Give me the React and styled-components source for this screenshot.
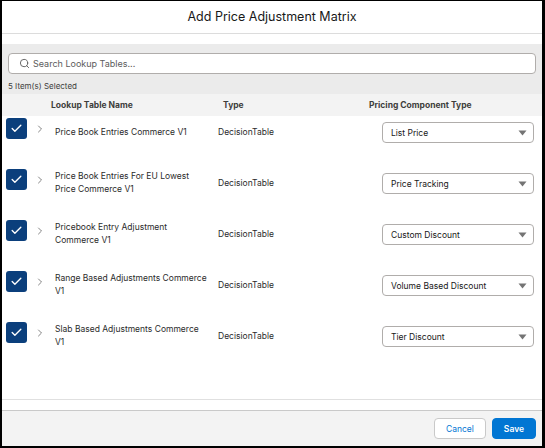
import React from 'react';
import styled, { createGlobalStyle } from 'styled-components';
import { Search, Check, ChevronRight } from 'lucide-react';

const GlobalStyles = createGlobalStyle`
  html, body {
    margin: 0;
    padding: 0;
    background: #fff;
  }
  body {
    font-family: Inter, "Liberation Sans", Arial, sans-serif;
    color: #181818;
  }
`;

const Frame = styled.div`
  width: 545px;
  height: 448px;
  box-sizing: border-box;
  border-style: solid;
  border-color: #000;
  border-width: 1px 3px 2px 2px;
  display: flex;
  flex-direction: column;
  background: #fff;
`;

const Header = styled.div`
  height: 32px;
  flex: none;
  display: flex;
  align-items: center;
  justify-content: center;
  border-bottom: 1px solid #dcdcdc;
`;

const Title = styled.h2`
  margin: 0 0 2px 0;
  font-size: 12.5px;
  font-weight: 400;
  color: #181818;
`;

const Gap = styled.div`
  height: ${(p) => p.h}px;
  flex: none;
`;

const Toolbar = styled.div`
  height: 50px;
  flex: none;
  box-sizing: border-box;
  background: #ebebeb;
  padding: 9px 6px 0 6px;
`;

const SearchBox = styled.label`
  height: 21px;
  box-sizing: border-box;
  border: 1px solid #b0adab;
  border-radius: 4px;
  background: #fff;
  display: flex;
  align-items: center;
  gap: 3px;
  padding-left: 10px;
  color: #5c5c5c;
`;

const SearchInput = styled.input`
  border: none;
  outline: none;
  flex: 1;
  font-family: inherit;
  font-size: 9px;
  color: #181818;
  background: transparent;
  padding: 0;
  &::placeholder {
    color: #5c5c5c;
  }
`;

const Selected = styled.div`
  font-size: 8px;
  color: #3e3e3c;
  margin-top: 7px;
`;

const TableArea = styled.div`
  flex: 1;
  border-bottom: 1px solid #e0e0e0;
`;

const HeadRow = styled.div`
  height: 22px;
  background: #f3f3f3;
  display: grid;
  grid-template-columns: 172px 146px auto;
  align-items: center;
  padding-left: 49px;
`;

const HeadCell = styled.div`
  font-size: 8.5px;
  font-weight: 700;
  color: #3e3e3c;
`;

const Row = styled.div`
  height: 51px;
  box-sizing: border-box;
  display: grid;
  grid-template-columns: 21px 28px 163px 164px 152px;
  align-items: start;
  padding: 2px 0 0 4px;
`;

const Checkbox = styled.span`
  width: 21px;
  height: 21px;
  border-radius: 3px;
  background: #0b3f7c;
  color: #fff;
  display: flex;
  align-items: center;
  justify-content: center;
`;

const Toggle = styled.span`
  height: 21px;
  display: flex;
  align-items: center;
  padding-left: 7px;
  color: #5c5c5c;
`;

const Cell = styled.div`
  min-height: 28px;
  display: flex;
  flex-direction: column;
  justify-content: center;
  font-size: 8.5px;
  line-height: 13px;
  color: #2b2b2b;
  white-space: nowrap;
`;

const Select = styled.div`
  margin-top: 4px;
  height: 21px;
  box-sizing: border-box;
  border: 1px solid #b0adab;
  border-radius: 4px;
  display: flex;
  align-items: center;
  justify-content: space-between;
  padding: 0 6px 0 8px;
  font-size: 8.5px;
  color: #181818;
`;

const Footer = styled.div`
  height: 36px;
  flex: none;
  box-sizing: border-box;
  border-top: 1px solid #c9c9c9;
  background: #f3f3f3;
  display: flex;
  align-items: center;
  justify-content: flex-end;
  gap: 6px;
  padding-right: 6px;
`;

const Button = styled.button`
  height: 21px;
  box-sizing: border-box;
  border-radius: 4px;
  font-family: inherit;
  font-size: 8.5px;
  padding: 0 11px;
  border: 1px solid ${(p) => (p.primary ? '#0176d3' : '#c9c9c9')};
  background: ${(p) => (p.primary ? '#0176d3' : '#fff')};
  color: ${(p) => (p.primary ? '#fff' : '#0176d3')};
  font-weight: ${(p) => (p.primary ? 600 : 400)};
  cursor: pointer;
`;

const Caret = () => (
  <svg width="9" height="6" viewBox="0 0 9 6">
    <path d="M0.5 0.5h8L4.5 5.5z" fill="#747474" />
  </svg>
);

const rows = [
  { name: ['Price Book Entries Commerce V1'], type: 'DecisionTable', component: 'List Price' },
  { name: ['Price Book Entries For EU Lowest', 'Price Commerce V1'], type: 'DecisionTable', component: 'Price Tracking' },
  { name: ['Pricebook Entry Adjustment', 'Commerce V1'], type: 'DecisionTable', component: 'Custom Discount' },
  { name: ['Range Based Adjustments Commerce', 'V1'], type: 'DecisionTable', component: 'Volume Based Discount' },
  { name: ['Slab Based Adjustments Commerce', 'V1'], type: 'DecisionTable', component: 'Tier Discount' },
];

const App = () => {
  return (
    <>
      <GlobalStyles />
      <Frame>
        <Header>
          <Title>Add Price Adjustment Matrix</Title>
        </Header>
        <Gap h={10} />
        <Toolbar>
          <SearchBox>
            <Search size={11} strokeWidth={2} />
            <SearchInput placeholder="Search Lookup Tables..." />
          </SearchBox>
          <Selected>5 Item(s) Selected</Selected>
        </Toolbar>
        <TableArea>
          <HeadRow>
            <HeadCell>Lookup Table Name</HeadCell>
            <HeadCell>Type</HeadCell>
            <HeadCell>Pricing Component Type</HeadCell>
          </HeadRow>
          {rows.map((r) => (
            <Row key={r.name.join(' ')}>
              <Checkbox>
                <Check size={13} strokeWidth={2.5} />
              </Checkbox>
              <Toggle>
                <ChevronRight size={12} strokeWidth={1.5} />
              </Toggle>
              <Cell>
                {r.name.map((line) => (
                  <span key={line}>{line}</span>
                ))}
              </Cell>
              <Cell>{r.type}</Cell>
              <Select>
                <span>{r.component}</span>
                <Caret />
              </Select>
            </Row>
          ))}
        </TableArea>
        <Gap h={10} />
        <Footer>
          <Button>Cancel</Button>
          <Button primary>Save</Button>
        </Footer>
      </Frame>
    </>
  );
};

export default App;
